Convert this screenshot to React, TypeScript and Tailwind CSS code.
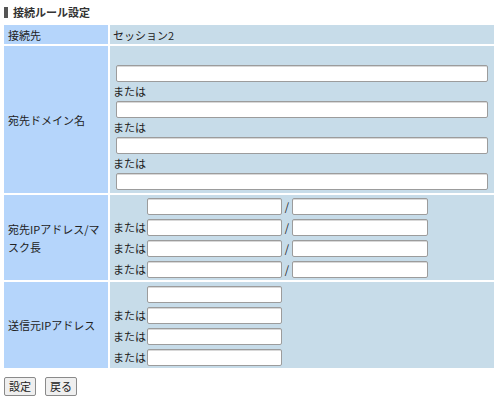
import React from "react"

const FONT = { fontFamily: '"Noto Sans CJK JP", "Noto Sans", sans-serif' }

const INPUT_CLS = "block h-[17px] bg-white border border-[#9c9c9c] rounded-[2px] shadow-[inset_0_1px_0_#d8d8d8]"

function TextBox({ className }: { className: string }) {
  return <input type="text" className={`${INPUT_CLS} ${className}`} />
}

function Label({ children }: { children: React.ReactNode }) {
  return (
    <td className="w-[104px] bg-[#b5d5fb] px-[4px] align-middle leading-[18px] text-[#222]">
      {children}
    </td>
  )
}

// または + 入力欄の行。先頭行はラベルなし
function OrRow({ first, children }: { first?: boolean; children: React.ReactNode }) {
  return (
    <div className="flex items-center h-[16px]">
      <span className="w-[34px] shrink-0 leading-[16px]">{first ? "" : "または"}</span>
      {children}
    </div>
  )
}

export default function App() {
  const four = [0, 1, 2, 3]
  return (
    <div className="w-[500px] h-[399px] bg-white px-[2px] pt-[4px] text-[11px] text-[#222]" style={FONT}>
      <h2 className="flex items-center h-[16px] ml-[2px] font-bold text-[#333] text-[11px]">
        <span className="w-[4px] h-[11px] bg-[#555] mr-[5px]" />
        接続ルール設定
      </h2>

      <table className="mt-[3px] w-[494px] border-separate border-spacing-[2px]">
        <tbody>
          <tr className="h-[19px]">
            <Label>接続先</Label>
            <td className="bg-[#c7dce9] px-[3px] leading-[18px]">セッション2</td>
          </tr>

          <tr>
            <Label>宛先ドメイン名</Label>
            <td className="bg-[#c7dce9] pl-[3px] pt-[19px] pb-[3px]">
              {four.map(i => (
                <div key={i}>
                  {i > 0 && <div className="leading-[19px] h-[19px]">または</div>}
                  <TextBox className="ml-[3px] w-[372px]" />
                </div>
              ))}
            </td>
          </tr>

          <tr>
            <Label>宛先IPアドレス/マスク長</Label>
            <td className="bg-[#c7dce9] pl-[3px] py-[3px]">
              <div className="flex flex-col gap-[5px]">
                {four.map(i => (
                  <OrRow key={i} first={i === 0}>
                    <TextBox className="w-[135px] h-[16px]" />
                    <span className="w-[10px] text-center">/</span>
                    <TextBox className="w-[136px] h-[16px]" />
                  </OrRow>
                ))}
              </div>
            </td>
          </tr>

          <tr>
            <Label>送信元IPアドレス</Label>
            <td className="bg-[#c7dce9] pl-[3px] pt-[4px] pb-[3px]">
              <div className="flex flex-col gap-[5px]">
                {four.map(i => (
                  <OrRow key={i} first={i === 0}>
                    <TextBox className="w-[135px] h-[16px]" />
                  </OrRow>
                ))}
              </div>
            </td>
          </tr>
        </tbody>
      </table>

      <div className="flex gap-[9px] ml-[2px] mt-[7px]">
        <button className="w-[32px] h-[19px] bg-[#efefef] border border-[#8a8a8a] rounded-[2px] text-[11px] leading-[17px]">
          設定
        </button>
        <button className="w-[32px] h-[19px] bg-[#efefef] border border-[#8a8a8a] rounded-[2px] text-[11px] leading-[17px]">
          戻る
        </button>
      </div>
    </div>
  )
}
